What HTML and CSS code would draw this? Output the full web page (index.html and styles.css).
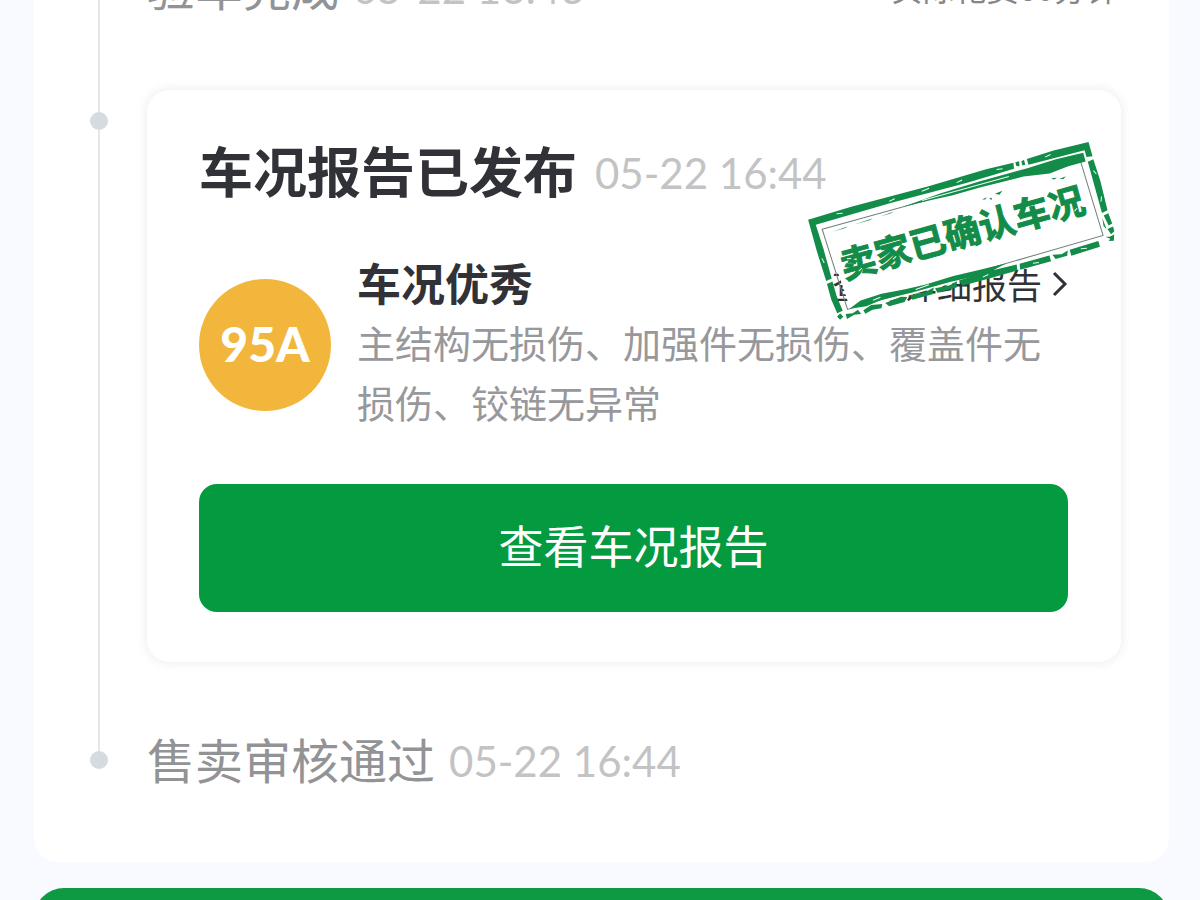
FILE: index.html
```html
<!DOCTYPE html>
<html lang="zh-CN">
<head>
<meta charset="utf-8">
<title>车况报告</title>
<link rel="stylesheet" href="styles.css">
</head>
<body>
<main class="page">
  <section class="panel">
    <ol class="timeline">
      <li class="step">
        <div class="marker"><span class="lead lead-first"></span><span class="dot"></span><span class="tail"></span></div>
        <div class="row">
          <h2 class="step-title">验车完成</h2>
          <time class="time">05-22 16:43</time>
          <span class="duration">实际花费60分钟</span>
        </div>
      </li>
      <li class="step">
        <div class="marker"><span class="lead"></span><span class="dot"></span><span class="tail"></span></div>
        <article class="card">
          <header class="row row-card">
            <h2 class="card-title">车况报告已发布</h2>
            <time class="time">05-22 16:44</time>
          </header>
          <div class="summary">
            <span class="score">95A</span>
            <div class="detail">
              <div class="detail-head">
                <h3 class="grade">车况优秀</h3>
                <a class="more" href="#report">查看详细报告
                  <svg class="chevron" viewBox="0 0 16 26" aria-hidden="true"><path d="M2 2 13 13 2 24" fill="none" stroke="currentColor" stroke-width="3"/></svg>
                </a>
              </div>
              <p class="desc">主结构无损伤、加强件无损伤、覆盖件无损伤、铰链无异常</p>
            </div>
          </div>
          <button class="primary" type="button">查看车况报告</button>
          <svg class="stamp" viewBox="-155 -91 310 182" role="img" aria-label="卖家已确认车况">
            <g transform="rotate(-15.5)">
              <path class="stamp-paper" d="M-133-41H132L134 41 30 42 10 47H-128Z"/>
              <path class="stamp-thin" d="M-134-40H133L135 41-131 44Z"/>
              <g class="stamp-ink">
                <path d="M-145-53-100-54-20-53 40-54 68-53 67-47 20-46-60-47-139-46-138-20-138 10-144 11-145-20Z"/>
                <path d="M82-53 110-54 146-53 146-38 140-39 140-46 82-47ZM70-53 74-53 73-48 70-49ZM76-52 79-53 79-48 76-48Z"/>
                <path d="M-144 14-138 13-138 28-136 44-142 45-144 30Z"/>
                <path d="M-50-40-10-43 30-44 80-44 110-45 138-44 138-35 120-35 100-33 74-37 30-38 0-38-20-39Z"/>
                <path d="M140-34 146-35 147-12 146 18 140 19 140-8ZM141 22 146 21 147 32 143 33ZM139 24 140 36 138 32ZM141 36 147 35 147 40 143 42ZM137 43 141 44 146 43 144 49 139 48 141 46Z"/>
                <path d="M-143 48-139 46-137 50-141 52ZM-134 48-127 49-121 47-119 52-126 51-134 53ZM-116 49-107 46-96 48-98 52-107 51-115 53ZM-93 48-76 46-70 48-74 52-90 52ZM-67 47-52 48-42 46-45 52-66 52ZM-41 47-26 48-18 46-20 52-40 52ZM-16 46 14 45 44 46 43 52 10 52-14 52ZM47 46 78 46 78 52 46 52ZM81 46 90 48 97 46 95 51 83 51ZM99 46 129 45 129 51 99 52Z"/>
                <path d="M-129 44-116 39-94 38-70 40-50 41-20 40 4 41 34 42 12 47-24 45-64 45-96 44-112 46Z"/>
                <path d="M28-26 33-27 31-25ZM35-25 38-25 37-23ZM42-28 50-29 46-26ZM100-28 106-27 103-26ZM108-25 115-26 112-24ZM-125-35-108-36-112-35ZM-102-36-82-37-86-36ZM-75-37-60-38-64-37Z"/>
              </g>
              <path class="stamp-wear" d="M-116-51-110-50M-62-49-56-50M-28-50-20-51M8-49 14-50M50-51 56-50M100-50 106-51M143-24 145-20M144 3 142 8M-142-12-141-7M-30-41 60-41M-104 42-96 41M-60 43-46 42M8 49 14 48M60 49 66 50M110 48 116 49"/>
              <text class="stamp-text" x="0" y="14">卖家已确认车况</text>
              <path class="stamp-wear" d="M-118-5-114-4M-110 10-106 8M-74 8-70 6M-44 11-40 10M66 4 69 6M114 10 117 8"/>
            </g>
          </svg>
        </article>
      </li>
      <li class="step">
        <div class="marker"><span class="lead"></span><span class="dot"></span></div>
        <div class="row">
          <h2 class="step-title">售卖审核通过</h2>
          <time class="time">05-22 16:44</time>
        </div>
      </li>
    </ol>
  </section>
  <div class="next-block"></div>
</main>
</body>
</html>
```
FILE: styles.css
```css
* { box-sizing: border-box; }

body {
  margin: 0;
  background: #f8faff;
  color: #303238;
  font-family: "Noto Sans CJK SC", sans-serif;
}

h2, h3, p, ol { margin: 0; padding: 0; }

.page {
  height: 100vh;
  overflow: hidden;
  padding: 0 31px 0 34px;
}

.panel {
  margin-top: -44px;
  padding: 0 48px 69px 56px;
  background: #fff;
  border-radius: 24px;
}

.timeline { list-style: none; }

.step {
  display: grid;
  grid-template-columns: 18px minmax(0, 1fr);
  column-gap: 39px;
}

.step > .row { padding-bottom: 70px; }
.step > .card { margin-bottom: 67px; }
.step:last-child > .row { padding-bottom: 0; }

.marker {
  display: flex;
  flex-direction: column;
  align-items: center;
}

.lead, .tail { width: 2px; background: #e6e7e9; }
.lead { height: 22px; }
.lead-first { background: none; }
.tail { flex: 1; }

.dot {
  width: 18px;
  height: 18px;
  border-radius: 50%;
  background: #d6dbe0;
}

.row {
  display: flex;
  align-items: center;
  gap: 14px;
  height: 64px;
  line-height: 64px;
  white-space: nowrap;
}

.step > .row { box-sizing: content-box; }
.row-card { gap: 18px; }

.step-title, .card-title { padding-bottom: 6px; }

.step-title {
  font-size: 48px;
  font-weight: 400;
  color: #929395;
}

.time {
  font-family: Lato, sans-serif;
  font-size: 42px;
  color: #c3c3c4;
}

.duration {
  margin-left: auto;
  padding: 0 3px 2px 0;
  font-size: 32px;
  color: #85868a;
}

.card {
  position: relative;
  padding: 51px 53px 50px 52px;
  border-radius: 22px;
  background: #fff;
  box-shadow: 0 0 12px rgba(0, 0, 0, 0.09);
}

.card-title { font-size: 54px; font-weight: 700; }

.summary {
  display: flex;
  align-items: center;
  gap: 26px;
  margin-top: 47px;
}

.score {
  flex: none;
  width: 132px;
  height: 132px;
  border-radius: 50%;
  background: #f2b63d;
  color: #fff;
  font: 900 48px/130px Lato, sans-serif;
  text-align: center;
}

.detail { flex: 1; min-width: 0; padding-bottom: 6px; }

.detail-head {
  display: flex;
  align-items: center;
  justify-content: space-between;
  height: 60px;
  line-height: 60px;
}

.grade { font-size: 44px; font-weight: 700; }

.more {
  display: flex;
  align-items: center;
  gap: 10px;
  padding-top: 4px;
  font-size: 35px;
  color: #303238;
  text-decoration: none;
}

.chevron { width: 16px; height: 26px; }

.desc {
  font-size: 38px;
  font-weight: 400;
  line-height: 60px;
  color: #97989b;
}

.primary {
  display: block;
  width: 100%;
  margin-top: 46px;
  padding: 29px 0 35px;
  border: 0;
  border-radius: 18px;
  background: #039a40;
  color: #fff;
  font: 400 45px/64px "Noto Sans CJK SC", sans-serif;
}

.stamp {
  position: absolute;
  top: 51px;
  right: 4px;
  width: 310px;
  height: 182px;
}

.stamp-paper { fill: #fff; }
.stamp-thin { fill: none; stroke: #6f8078; stroke-width: 1; }
.stamp-ink { fill: #128c48; }
.stamp-wear { fill: none; stroke: #e9fff1; stroke-width: 1; }

.stamp-text {
  fill: #128c48;
  stroke: #128c48;
  stroke-width: 1;
  font-size: 36px;
  font-weight: 700;
  text-anchor: middle;
}

.next-block {
  height: 120px;
  margin-top: 26px;
  border-radius: 30px;
  background: #0d9a43;
}
```
